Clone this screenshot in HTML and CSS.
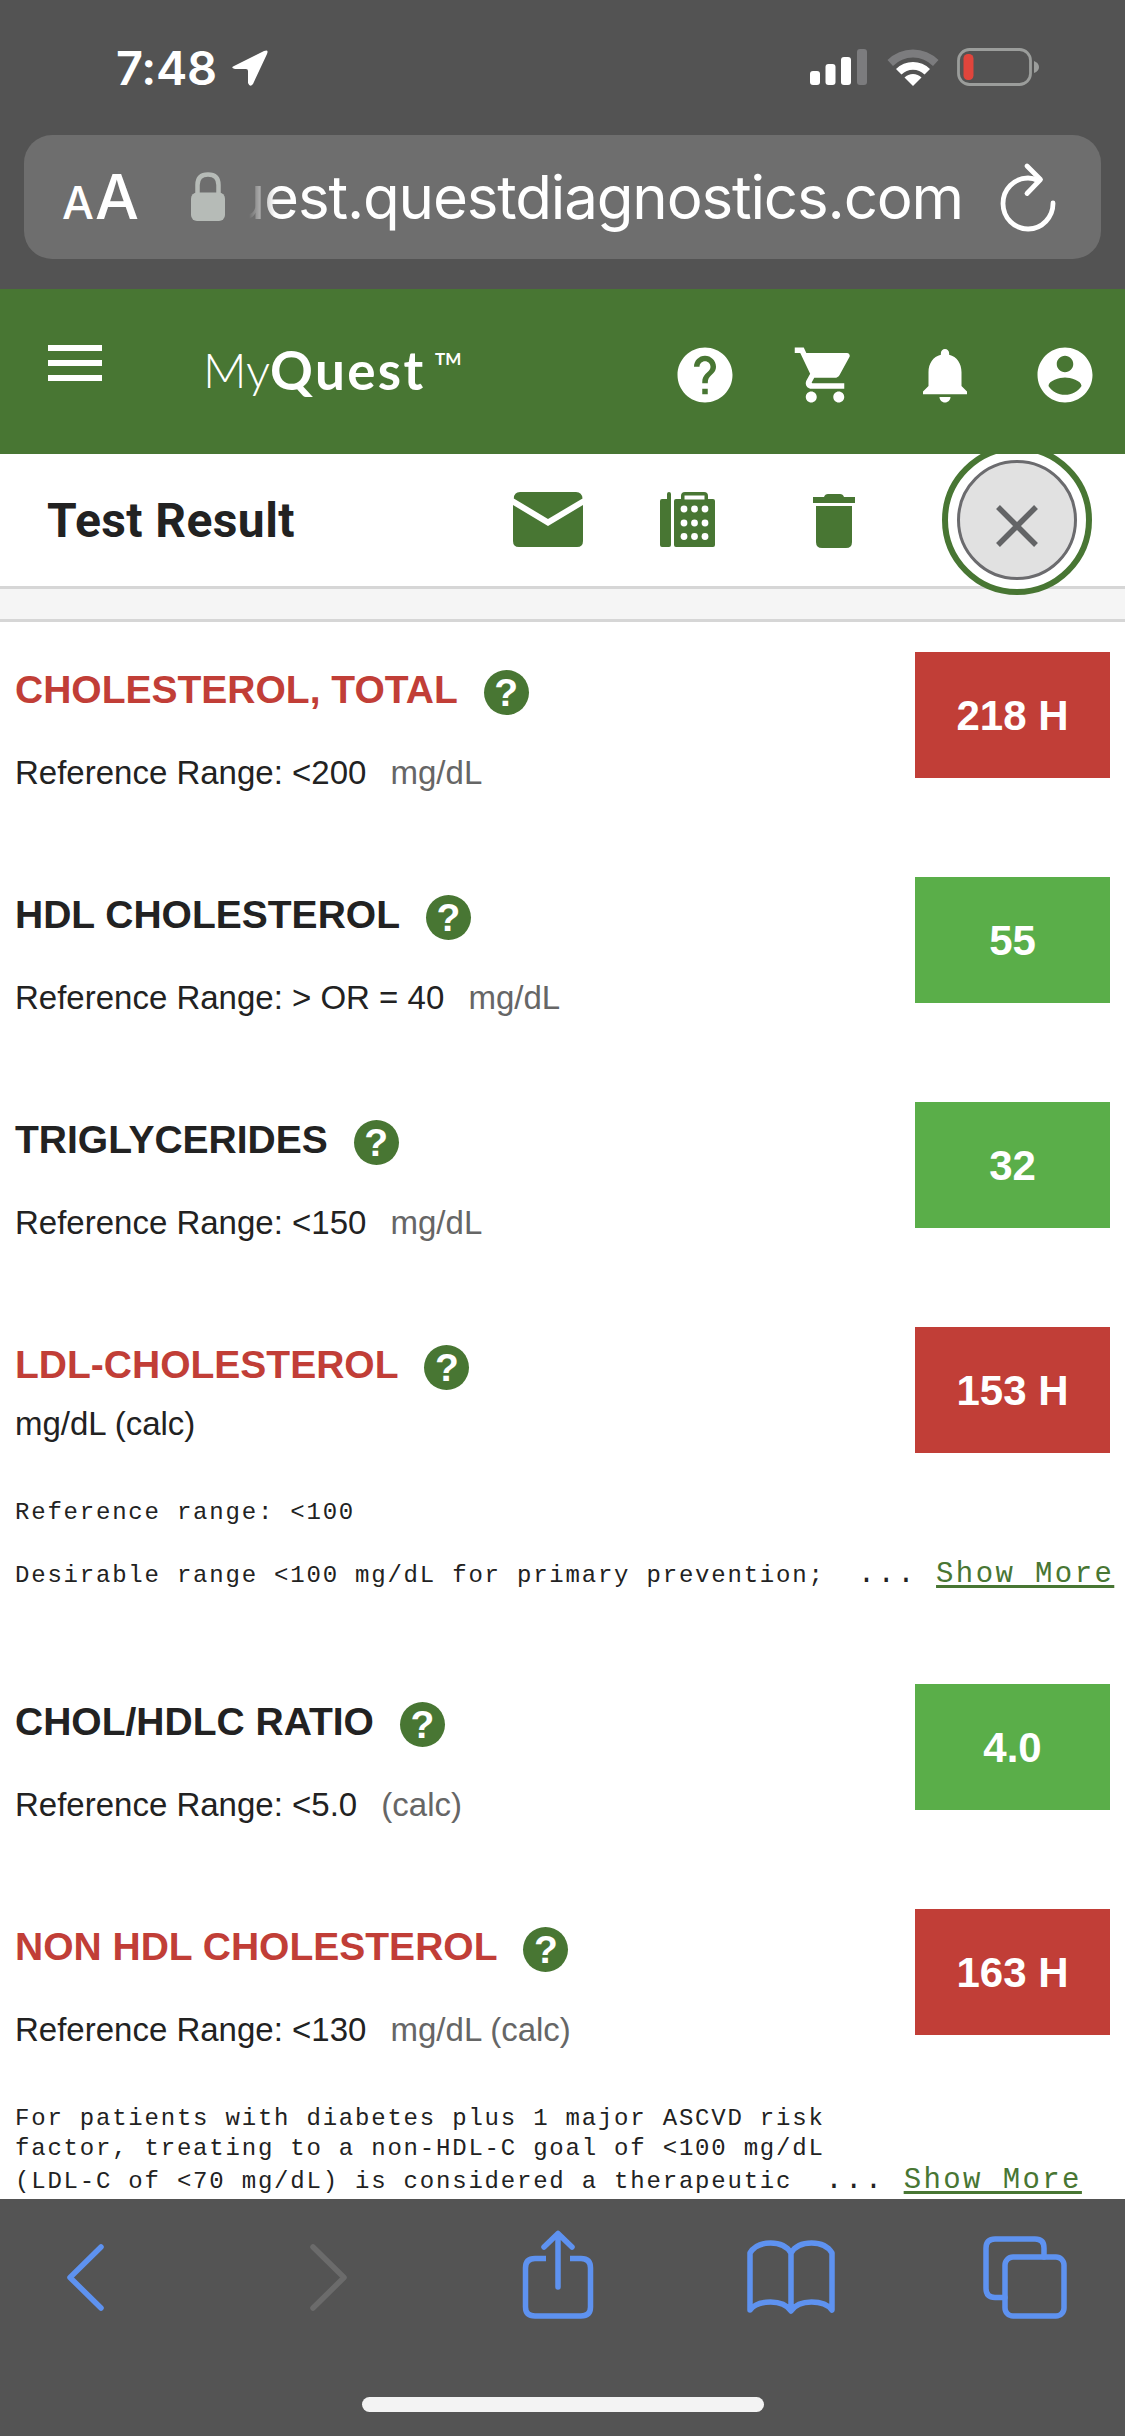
FILE: index.html
```html
<!DOCTYPE html>
<html lang="en">
  <head>
    <meta charset="UTF-8" />
    <meta name="viewport" content="width=device-width, initial-scale=1.0" />
    <title>MyQuest - Test Result</title>
    <link rel="stylesheet" href="styles.css">
  </head>
  <body>
    <div class="browser-top">
      <div class="status-bar">
        <span class="time">7:48</span>
        <svg class="location" width="38" height="38" viewBox="0 0 38 38">
          <path d="M3 17 L33 2 Q38 0 36 5 L22 35 Q19 39 17 34 V22 Q17 20 15 20 H4 Q-1 19 3 17 Z" fill="#fff" />
        </svg>
        <svg class="signal" width="58" height="38" viewBox="0 0 58 38">
          <rect x="0" y="23" width="10" height="14" rx="3" fill="#fff" />
          <rect x="15.5" y="16" width="10" height="21" rx="3" fill="#fff" />
          <rect x="31" y="9" width="10" height="28" rx="3" fill="#fff" />
          <rect x="47" y="1" width="10" height="36" rx="3" fill="#7c7c7e" />
        </svg>
        <svg class="wifi" width="52" height="38" viewBox="0 0 52 38">
          <path d="M0.500 12 A36 36 0 0 1 51.500 12 L46 18 A28 28 0 0 0 6 18 Z" fill="#7c7c7e" />
          <path d="M9 21 A24 24 0 0 1 43 21 L37.500 26.500 A16.500 16.500 0 0 0 14.500 26.500 Z" fill="#fff" />
          <path d="M17.500 29.500 A12 12 0 0 1 34.500 29.500 L26 38 Z" fill="#fff" />
        </svg>
        <svg class="battery" width="84" height="38" viewBox="0 0 84 38">
          <rect x="1.500" y="1.500" width="72" height="35" rx="11" fill="none" stroke="#9b9d9b" stroke-width="2.800" />
          <path d="M77 13 Q82 15 82 19 Q82 23 77 25 Z" fill="#9b9d9b" />
          <rect x="6.500" y="6" width="10" height="26" rx="4.500" fill="#e0453c" />
        </svg>
      </div>

      <div class="address-bar">
        <span class="text-size"><span class="small-a">A</span><span>A</span></span>
        <svg class="lock" width="34" height="50" viewBox="0 0 34 50">
          <path d="M6.500 24 V13 Q6.500 2.500 17 2.500 Q27.500 2.500 27.500 13 V24" fill="none" stroke="#b6bbb7" stroke-width="4.500" />
          <rect x="0" y="20.500" width="34" height="28.500" rx="6" fill="#b6bbb7" />
        </svg>
        <div class="url"><span>uest.questdiagnostics.com</span></div>
        <svg class="reload" width="58" height="70" viewBox="0 0 58 70">
          <g fill="none" stroke="#fff" stroke-width="4.800" stroke-linecap="round" stroke-linejoin="round">
            <path d="M38 18.500 C34 16.500 31 16 28 16 A25 25.500 0 1 0 53 41" />
            <path d="M27 4 L40.500 17.500 L27 31.500" />
          </g>
        </svg>
      </div>
    </div>

    <header class="site-header">
      <div class="menu"><i></i><i></i><i></i></div>
      <div class="logo"><span class="logo-my">My</span><span class="logo-quest">Quest</span><span class="logo-tm">TM</span></div>
      <nav class="header-icons">
        <svg viewBox="0 0 24 24"><path d="M12 2C6.480 2 2 6.480 2 12s4.480 10 10 10 10-4.480 10-10S17.520 2 12 2zm1 17h-2v-2h2v2zm2.070-7.750l-.9.920C13.450 12.900 13 13.500 13 15h-2v-.5c0-1.100.45-2.100 1.170-2.830l1.240-1.260c.37-.36.59-.86.59-1.410 0-1.100-.9-2-2-2s-2 .9-2 2H8c0-2.210 1.790-4 4-4s4 1.790 4 4c0 .88-.36 1.680-.93 2.250z" /></svg>
        <svg viewBox="0 0 24 24"><path d="M7 18c-1.100 0-1.990.9-1.990 2S5.900 22 7 22s2-.9 2-2-.9-2-2-2zM1 2v2h2l3.600 7.590-1.350 2.450c-.16.28-.25.61-.25.96 0 1.100.9 2 2 2h12v-2H7.420c-.14 0-.25-.11-.25-.25l.03-.12.9-1.630h7.450c.75 0 1.410-.41 1.750-1.030l3.580-6.490c.08-.14.12-.31.12-.48 0-.55-.45-1-1-1H5.210l-.94-2H1zm16 16c-1.100 0-1.990.9-1.990 2s.89 2 1.990 2 2-.9 2-2-.9-2-2-2z" /></svg>
        <svg viewBox="0 0 24 24"><path d="M12 22c1.100 0 2-.9 2-2h-4c0 1.100.89 2 2 2zm6-6v-5c0-3.070-1.640-5.640-4.500-6.320V4c0-.83-.67-1.500-1.500-1.500s-1.500.67-1.500 1.500v.68C7.630 5.360 6 7.920 6 11v5l-2 2v1h16v-1l-2-2z" /></svg>
        <svg viewBox="0 0 24 24"><path d="M12 2C6.480 2 2 6.480 2 12s4.480 10 10 10 10-4.480 10-10S17.520 2 12 2zm0 3c1.660 0 3 1.340 3 3s-1.340 3-3 3-3-1.340-3-3 1.340-3 3-3zm0 14.200c-2.500 0-4.710-1.280-6-3.220.03-1.990 4-3.080 6-3.080 1.990 0 5.970 1.090 6 3.080-1.290 1.940-3.500 3.220-6 3.220z" /></svg>
      </nav>
    </header>

    <div class="toolbar">
      <h1>Test Result</h1>
      <svg class="mail" width="70" height="56" viewBox="0 0 70 56">
        <path d="M7 0 H63 Q69 0 69.500 6.500 L35 27 L0.800 6.500 Q1 0 7 0 Z" />
        <path d="M0 13 L35 34 L70 13 V49 Q70 55 64 55 H6 Q0 55 0 49 Z" />
      </svg>
      <svg class="fax" width="56" height="56" viewBox="0 0 56 56">
        <path d="M0 9 Q0 7 2 7 H7 V2 Q7 0 9 0 Q11 0 11 2 V53 Q11 55 9 55 H2 Q0 55 0 53 Z" />
        <path d="M14 9 Q14 7 16 7 H21 V4 Q21 0 25 0 H44 Q48 0 48 4 V7 H53 Q55 7 55 9 V53 Q55 55 53 55 H16 Q14 55 14 53 Z" />
        <path d="M24.500 3.500 H44.500 V7.500 H24.500 Z" fill="#fff" />
        <g fill="#fff">
          <circle cx="24" cy="17" r="3.400" /><circle cx="34.500" cy="17" r="3.400" /><circle cx="45" cy="17" r="3.400" />
          <circle cx="24" cy="31" r="3.400" /><circle cx="34.500" cy="31" r="3.400" /><circle cx="45" cy="31" r="3.400" />
          <circle cx="24" cy="44.500" r="3.400" /><circle cx="34.500" cy="44.500" r="3.400" /><circle cx="45" cy="44.500" r="3.400" />
        </g>
      </svg>
      <svg class="trash" width="42" height="54" viewBox="0 0 42 54">
        <path d="M0 3 H11 Q12 0 15 0 H27 Q30 0 31 3 H42 V9 H0 Z" />
        <path d="M3 12 H39 V48 Q39 54 33 54 H9 Q3 54 3 48 Z" />
      </svg>
      <div class="close">
        <div class="close-inner">
          <svg width="44" height="44" viewBox="0 0 44 44"><path d="M3 3 L41 41 M41 3 L3 41" stroke="#636466" stroke-width="5.500" /></svg>
        </div>
      </div>
    </div>
    <div class="strip"></div>

    <main class="results">
      <section class="result high">
        <div class="result-head">
          <div class="info">
            <h2>CHOLESTEROL, TOTAL <span class="help">?</span></h2>
            <p>Reference Range: &lt;200 <span class="unit">mg/dL</span></p>
          </div>
          <div class="value">218 H</div>
        </div>
      </section>

      <section class="result">
        <div class="result-head">
          <div class="info">
            <h2>HDL CHOLESTEROL <span class="help">?</span></h2>
            <p>Reference Range: &gt; OR = 40 <span class="unit">mg/dL</span></p>
          </div>
          <div class="value">55</div>
        </div>
      </section>

      <section class="result">
        <div class="result-head">
          <div class="info">
            <h2>TRIGLYCERIDES <span class="help">?</span></h2>
            <p>Reference Range: &lt;150 <span class="unit">mg/dL</span></p>
          </div>
          <div class="value">32</div>
        </div>
      </section>

      <section class="result high result-ldl">
        <div class="result-head">
          <div class="info">
            <h2>LDL-CHOLESTEROL <span class="help">?</span></h2>
            <p class="no-range">mg/dL (calc)</p>
          </div>
          <div class="value">153 H</div>
        </div>
        <div class="notes">
          <div class="note-line">Reference range: &lt;100</div>
          <div class="note-line">&nbsp;</div>
          <div class="note-line last">Desirable range &lt;100 mg/dL for primary prevention;<span class="dots">...</span><a class="show-more">Show More</a></div>
        </div>
      </section>

      <section class="result">
        <div class="result-head">
          <div class="info">
            <h2>CHOL/HDLC RATIO <span class="help">?</span></h2>
            <p>Reference Range: &lt;5.0 <span class="unit">(calc)</span></p>
          </div>
          <div class="value">4.0</div>
        </div>
      </section>

      <section class="result high">
        <div class="result-head">
          <div class="info">
            <h2>NON HDL CHOLESTEROL <span class="help">?</span></h2>
            <p>Reference Range: &lt;130 <span class="unit">mg/dL (calc)</span></p>
          </div>
          <div class="value">163 H</div>
        </div>
        <div class="notes">
          <div class="note-line">For patients with diabetes plus 1 major ASCVD risk</div>
          <div class="note-line">factor, treating to a non-HDL-C goal of &lt;100 mg/dL</div>
          <div class="note-line last">(LDL-C of &lt;70 mg/dL) is considered a therapeutic<span class="dots">...</span><a class="show-more">Show More</a></div>
        </div>
      </section>
    </main>

    <footer class="browser-bottom">
      <div class="nav-icons">
        <svg width="40" height="90" viewBox="0 0 40 90"><path d="M36 17 L5 47.500 L36 78" /></svg>
        <svg class="disabled" width="40" height="90" viewBox="0 0 40 90"><path d="M4 17 L35 47.500 L4 78" /></svg>
        <svg width="72" height="90" viewBox="0 0 72 90">
          <path d="M24 28.500 H13 Q3.500 28.500 3.500 38 V77 Q3.500 86 13 86 H59 Q68.500 86 68.500 77 V38 Q68.500 28.500 59 28.500 H48" stroke-linecap="butt" />
          <path d="M36 57 V4 M22 17 L36 3.500 L50 17" />
        </svg>
        <svg width="88" height="90" viewBox="0 0 88 90">
          <path d="M44 23 Q38 13 23.500 13 Q9 13 3 23 V80 Q9 72 23.500 72 Q38 72 44 81 Q50 72 64.500 72 Q79 72 85 80 V23 Q79 13 64.500 13 Q50 13 44 23 V80" />
        </svg>
        <svg width="84" height="90" viewBox="0 0 84 90">
          <rect x="22" y="27" width="59" height="59" rx="8" />
          <path d="M22 67.500 H12 Q3 67.500 3 58.500 V18 Q3 9 12 9 H52 Q61 9 61 18 V27" />
        </svg>
      </div>
      <div class="home-indicator"></div>
    </footer>
  </body>
</html>
```

FILE: styles.css
```css
* {
  box-sizing: border-box;
}
body {
  margin: 0;
  width: 1125px;
  height: 2436px;
  display: flex;
  flex-direction: column;
  overflow: hidden;
  background: #fff;
  color: #222;
  font-family: "Liberation Sans", Arial, sans-serif;
}
svg {
  display: block;
  flex-shrink: 0;
}

/* browser chrome */
.browser-top {
  height: 289px;
  flex-shrink: 0;
  background: #535353;
  color: #fff;
  font-family: Inter, sans-serif;
}
.status-bar {
  height: 135px;
  display: flex;
  align-items: flex-start;
  padding: 48px 84px 0 116px;
}
.time {
  width: 115px;
  font-size: 47px;
  font-weight: 600;
  line-height: 40px;
  letter-spacing: -0.3px;
}
.location {
  margin: 1px auto 0 0;
}
.signal {
  margin-right: 19px;
}
.wifi {
  margin-right: 18px;
}
.address-bar {
  height: 124px;
  margin: 0 24px;
  padding: 0 43px 0 38px;
  display: flex;
  align-items: center;
  border-radius: 28px;
  background: #6e6e6e;
}
.text-size {
  width: 129px;
  display: flex;
  align-items: baseline;
  gap: 2px;
  padding-top: 6px;
  font-size: 62px;
  font-weight: 500;
  line-height: 70px;
  letter-spacing: -1px;
}
.small-a {
  font-size: 45px;
}
.url {
  width: 714px;
  margin-left: 24px;
  display: flex;
  justify-content: flex-end;
  overflow: hidden;
  white-space: nowrap;
  font-size: 60px;
  line-height: 80px;
  letter-spacing: -1.15px;
  -webkit-mask-image: linear-gradient(to right, transparent, #000 26px);
  mask-image: linear-gradient(to right, transparent, #000 26px);
}
.reload {
  margin-left: auto;
}

/* site header */
.site-header {
  position: relative;
  z-index: 2;
  height: 165px;
  flex-shrink: 0;
  display: flex;
  align-items: flex-start;
  padding: 0 27px 0 48px;
  background: #487633;
  color: #fff;
}
.menu {
  width: 54px;
  margin-top: 56px;
  display: flex;
  flex-direction: column;
  gap: 9px;
}
.menu i {
  height: 6px;
  background: #fff;
}
.logo {
  display: flex;
  margin: 51px 0 0 101px;
  font-family: Lato, sans-serif;
  font-size: 48px;
  line-height: 60px;
}
.logo-my {
  width: 67px;
  font-weight: 300;
}
.logo-quest {
  width: 165px;
  font-size: 53px;
  font-weight: 700;
  letter-spacing: 2.4px;
}
.logo-tm {
  font-size: 17px;
  font-weight: 700;
  line-height: 38px;
}
.header-icons {
  display: flex;
  gap: 54px;
  margin: 53px 0 0 auto;
}
.header-icons svg {
  width: 66px;
  height: 66px;
  fill: #fff;
}

/* test result toolbar */
.toolbar {
  position: relative;
  z-index: 1;
  height: 135px;
  flex-shrink: 0;
  display: flex;
  align-items: center;
  padding-left: 47px;
  border-bottom: 3px solid #d6d6d6;
  background: #fff;
  fill: #487633;
}
.toolbar h1 {
  width: 466px;
  margin: 0;
  font-family: Roboto, sans-serif;
  font-size: 48px;
  font-weight: 700;
  letter-spacing: 0.4px;
}
.mail {
  margin-right: 77px;
}
.fax {
  margin-right: 97px;
}
.trash {
  margin: 2px 87px 0 0;
}
.close {
  width: 150px;
  height: 150px;
  flex-shrink: 0;
  padding: 9px;
  border: 6px solid #487633;
  border-radius: 50%;
  background: #fff;
}
.close-inner {
  height: 120px;
  display: flex;
  align-items: center;
  justify-content: center;
  padding-top: 12px;
  border: 3px solid #6b6b6e;
  border-radius: 50%;
  background: #e1e1e1;
}
.strip {
  height: 33px;
  flex-shrink: 0;
  border-bottom: 3px solid #d6d6d6;
  background: #f5f5f5;
}

/* results */
.results {
  flex: 1;
  min-height: 0;
  overflow: hidden;
}
.result {
  height: 225px;
  padding: 30px 15px 0;
}
.result-ldl {
  height: 357px;
}
.result-head {
  display: flex;
  justify-content: space-between;
  height: 140px;
}
.info {
  padding-top: 18px;
}
.info h2 {
  display: flex;
  height: 45px;
  margin: 0;
  font-size: 39px;
  line-height: 39px;
}
.high h2 {
  color: #c13e37;
}
.help {
  width: 45px;
  height: 45px;
  margin-left: 26px;
  border-radius: 50%;
  background: #487633;
  color: #fff;
  font-size: 39px;
  line-height: 46px;
  text-align: center;
}
.info p {
  margin: 38px 0 0;
  font-size: 33px;
  line-height: 40px;
}
.info .no-range {
  margin-top: 14px;
}
.unit {
  margin-left: 15px;
  color: #666;
}
.value {
  width: 195px;
  height: 126px;
  background: #5aae49;
  color: #fff;
  font-size: 42px;
  font-weight: 700;
  line-height: 128px;
  text-align: center;
}
.high .value {
  background: #c13e37;
}
.notes {
  padding-top: 55px;
  font-family: "Liberation Mono", "Courier New", monospace;
  font-size: 24px;
  letter-spacing: 1.79px;
}
.result-ldl .notes {
  padding-top: 31px;
}
.note-line {
  height: 30px;
  line-height: 30px;
  white-space: nowrap;
}
.note-line.last {
  height: 34px;
  line-height: 34px;
}
.dots,
.show-more {
  font-size: 29px;
  letter-spacing: 2.4px;
}
.dots {
  margin: 0 19px 0 33px;
}
.show-more {
  color: #487633;
  text-decoration: underline;
  text-decoration-thickness: 3px;
  text-underline-offset: 3px;
}

/* bottom bar */
.browser-bottom {
  height: 237px;
  flex-shrink: 0;
  background: #545454;
}
.nav-icons {
  height: 198px;
  padding: 31px 0 0 65px;
  display: grid;
  grid-template-columns: 244px 213px 225px 236px 84px;
}
.nav-icons svg {
  fill: none;
  stroke: #5e92f0;
  stroke-width: 5.5;
  stroke-linecap: round;
  stroke-linejoin: round;
}
.nav-icons .disabled {
  stroke: #6b6b6b;
}
.home-indicator {
  width: 402px;
  height: 15px;
  margin: 0 auto;
  border-radius: 8px;
  background: #f3f3f3;
}
```
